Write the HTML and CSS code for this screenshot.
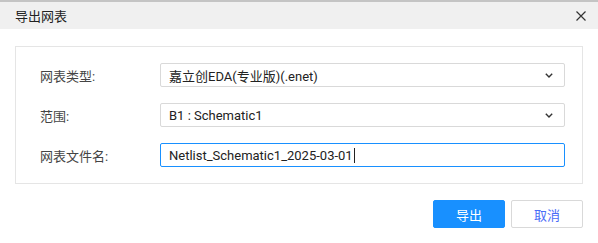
FILE: index.html
```html
<!DOCTYPE html>
<html lang="zh-CN">
<head>
  <meta charset="UTF-8" />
  <title>导出网表</title>
  <link rel="stylesheet" href="styles.css">
</head>
<body>
  <div class="dialog">
    <div class="dialog-head">
      <span class="dialog-title">导出网表</span>
      <svg class="close-icon" viewBox="0 0 10 10" width="10" height="10">
        <path d="M0.5 0.5 L9.5 9.5 M9.5 0.5 L0.5 9.5" stroke="#333" stroke-width="1.2" fill="none"/>
      </svg>
    </div>

    <div class="dialog-body">
      <div class="form-panel">
        <div class="form-row">
          <label class="form-label">网表类型:</label>
          <div class="field select">
            <span>嘉立创EDA(专业版)(.enet)</span>
            <svg class="chevron" viewBox="0 0 8 5" width="8" height="5">
              <path d="M0.8 0.8 L4 4 L7.2 0.8" stroke="#333" stroke-width="1.4" fill="none"/>
            </svg>
          </div>
        </div>
        <div class="form-row">
          <label class="form-label">范围:</label>
          <div class="field select">
            <span>B1 : Schematic1</span>
            <svg class="chevron" viewBox="0 0 8 5" width="8" height="5">
              <path d="M0.8 0.8 L4 4 L7.2 0.8" stroke="#333" stroke-width="1.4" fill="none"/>
            </svg>
          </div>
        </div>
        <div class="form-row">
          <label class="form-label">网表文件名:</label>
          <div class="field input focused">
            <span>Netlist_Schematic1_2025-03-01</span><span class="caret"></span>
          </div>
        </div>
      </div>

      <div class="dialog-foot">
        <button class="btn btn-primary">导出</button>
        <button class="btn">取消</button>
      </div>
    </div>
  </div>
</body>
</html>
```

FILE: styles.css
```css
html, body {
  margin: 0;
  padding: 0;
  background: #fff;
  font-family: Roboto, "Noto Sans CJK SC", sans-serif;
  font-size: 13px;
  color: #333;
}

.dialog {
  width: 598px;
  height: 243px;
  border-top: 2px solid #c4c4c4;
  box-sizing: border-box;
}

.dialog-head {
  height: 27px;
  background: #f0f0f0;
  display: flex;
  align-items: center;
  justify-content: space-between;
  padding: 0 12px 0 15px;
}

.dialog-title {
  font-size: 13px;
  color: #222;
}

.close-icon {
  display: block;
}

.dialog-body {
  padding: 17px 15px 0 15px;
}

.form-panel {
  border: 1px solid #e5e5e5;
  padding: 16px 17px 16px 24px;
  display: flex;
  flex-direction: column;
  gap: 16px;
}

.form-row {
  display: flex;
  align-items: center;
}

.form-label {
  flex: 0 0 120px;
  color: #444;
}

.field {
  flex: 1;
  height: 24px;
  box-sizing: border-box;
  border: 1px solid #d9d9d9;
  border-radius: 2px;
  display: flex;
  align-items: center;
  padding: 0 10px 0 8px;
  color: #222;
}

.select {
  justify-content: space-between;
}

.chevron {
  display: block;
  margin-right: 1px;
}

.focused {
  border-color: #1890ff;
}

.caret {
  display: inline-block;
  width: 1px;
  height: 15px;
  background: #222;
  margin-left: 1px;
}

.dialog-foot {
  display: flex;
  justify-content: flex-end;
  gap: 6px;
  padding-top: 16px;
}

.btn {
  width: 72px;
  height: 28px;
  border: 1px solid #d9d9d9;
  border-radius: 2px;
  background: #fff;
  font-family: inherit;
  font-size: 13px;
  color: #4a6cf7;
  padding: 0;
}

.btn-primary {
  background: #1890ff;
  border-color: #1890ff;
  color: #fff;
}
```
